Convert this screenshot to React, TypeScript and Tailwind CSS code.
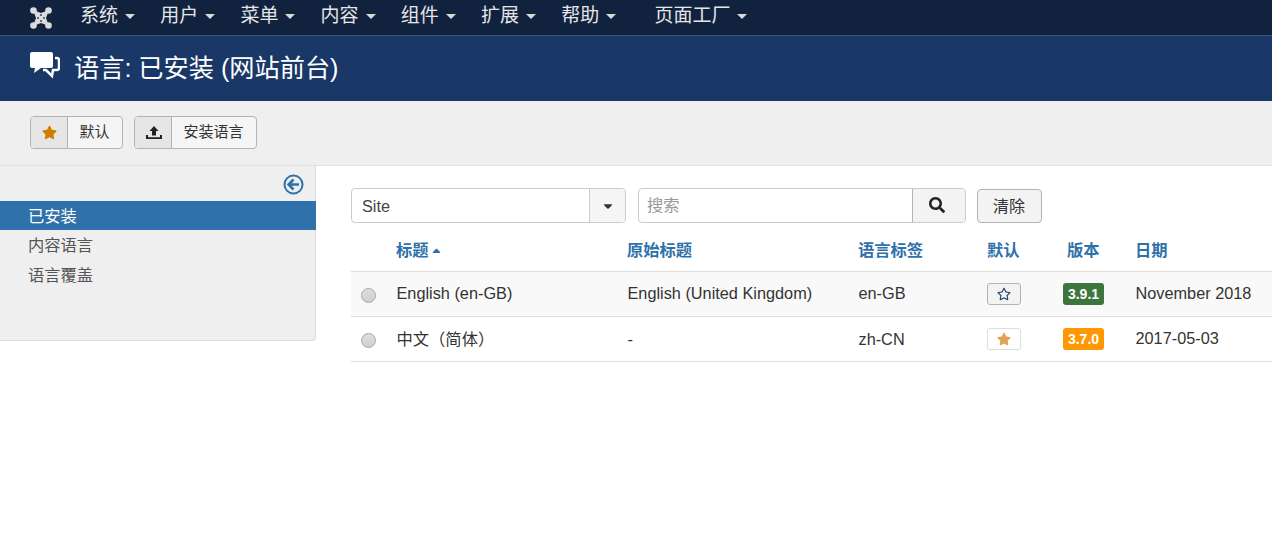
import { FaStar, FaRegStar, FaSearch, FaCaretDown, FaCaretUp } from "react-icons/fa";

const FONT = "font-['Liberation_Sans','Noto_Sans_CJK_SC',sans-serif]";

const menus = ["系统", "用户", "菜单", "内容", "组件", "扩展", "帮助"];

const Caret = () => <span className="ml-[7px] inline-block border-x-[5px] border-t-[5px] border-x-transparent border-t-[#d9d9d9]" />;

const JoomlaLogo = () => (
  <svg width="22" height="22" viewBox="0 0 22 22">
    <path d="M3 3L11 6L19 3L16 11L19 19L11 16L3 19L6 11z" fill="#dcdcdc" />
    <g fill="#dcdcdc">
      <circle cx="3.500" cy="3.500" r="3.300" />
      <circle cx="18.500" cy="3.500" r="3.300" />
      <circle cx="3.500" cy="18.500" r="3.300" />
      <circle cx="18.500" cy="18.500" r="3.300" />
    </g>
    <g fill="#3c4a63">
      <circle cx="11" cy="8" r="1" />
      <circle cx="14" cy="11" r="1" />
      <circle cx="11" cy="14" r="1" />
      <circle cx="8" cy="11" r="1" />
    </g>
  </svg>
);

const ChatIcon = () => (
  <svg width="30" height="27" viewBox="0 0 30 27" fill="none">
    <path d="M2 0h19a2 2 0 0 1 2 2v12a2 2 0 0 1-2 2H11l-7 5 1-5H2a2 2 0 0 1-2-2V2a2 2 0 0 1 2-2z" fill="#fff" />
    <path d="M25 6h2a2 2 0 0 1 2 2v8a2 2 0 0 1-2 2h-4l-1 6-6-6h-3" stroke="#fff" strokeWidth="2.500" />
  </svg>
);

const UploadIcon = () => (
  <svg width="16" height="13" viewBox="0 0 16 13" fill="#222" className="ml-[1px]">
    <path d="M8 0l4.500 5H10v4.500H6V5H3.500z" />
    <path d="M0 9h2v2.200h12V9h2v4H0z" />
  </svg>
);

const BackIcon = () => (
  <svg width="21" height="21" viewBox="0 0 21 21" fill="none" stroke="#2f71aa">
    <circle cx="10.500" cy="10.500" r="9" strokeWidth="2" />
    <path d="M16 10.500H6M10.500 5.500l-5 5 5 5" strokeWidth="2.500" />
  </svg>
);

const Radio = () => <span className="block h-[15px] w-[15px] rounded-full border border-[#a8a8a8] bg-gradient-to-b from-[#dedede] to-[#cfcfcf]" />;

const ToolButton = ({ icon, label, labelWidth }: { icon: React.ReactNode; label: string; labelWidth: string }) => (
  <div className="flex h-[33px] overflow-hidden rounded-[4px] border border-[#b3b3b3] bg-[#f5f5f5]">
    <span className="flex w-[37px] items-center justify-center border-r border-[#b3b3b3] bg-[#e6e6e6]">{icon}</span>
    <span className={`flex items-center justify-center pr-[1px] text-[15px] text-[#333] ${labelWidth}`}>{label}</span>
  </div>
);

const rows = [
  { title: "English (en-GB)", orig: "English (United Kingdom)", tag: "en-GB", on: false, ver: "3.9.1", color: "bg-[#3c763d]", date: "November 2018" },
  { title: "中文（简体）", orig: "-", tag: "zh-CN", on: true, ver: "3.7.0", color: "bg-[#ff9800]", date: "2017-05-03" },
];

export default function App() {
  return (
    <div className={`${FONT} h-[540px] w-[1272px] overflow-hidden bg-white text-[16.3px] text-[#333]`}>
      <nav className="flex h-[36px] items-center border-b border-[#3a5578] bg-[#11223f] pl-[30px] text-[#e6e6e6]">
        <span className="mr-[28px]"><JoomlaLogo /></span>
        <div className="flex items-center gap-[25.200px] pb-[3px] text-[19px]">
          {menus.map((m) => (
            <span key={m} className="flex items-center">{m}<Caret /></span>
          ))}
          <span className="ml-[13px] flex items-center">页面工厂<Caret /></span>
        </div>
      </nav>

      <header className="flex h-[65px] items-center gap-[14px] bg-[#1a3867] pl-[30px] text-white">
        <span className="mb-[7px]"><ChatIcon /></span>
        <h1 className="text-[25.200px]">语言: 已安装 (网站前台)</h1>
      </header>

      <div className="flex h-[65px] items-center gap-[11px] border-b border-[#e1e1e1] bg-[#efefef] pb-[2px] pl-[30px]">
        <ToolButton icon={<FaStar className="h-[15px] w-[15px] text-[#d17d00]" />} label="默认" labelWidth="w-[54px]" />
        <ToolButton icon={<UploadIcon />} label="安装语言" labelWidth="w-[84px]" />
      </div>

      <div className="flex">
        <aside className="h-[175px] w-[316px] shrink-0 rounded-br-[4px] border-b border-[#dcdcdc] bg-[#efefef] shadow-[inset_-1px_0_0_#dcdcdc]">
          <div className="flex h-[35px] items-center justify-end pr-[12px] pt-[1px]"><BackIcon /></div>
          <div className="flex h-[29px] items-center bg-[#2f71aa] pl-[28px] pt-[1px] text-white">已安装</div>
          <div className="flex h-[30px] items-center pl-[28px] pt-[1px] text-[#555]">内容语言</div>
          <div className="flex h-[29px] items-center pl-[28px] pt-[1px] text-[#555]">语言覆盖</div>
        </aside>

        <main className="ml-[35px] min-w-0 flex-1 pt-[22px]">
          <div className="flex h-[35px] items-start">
            <div className="flex h-[35px] w-[275px] overflow-hidden rounded-[4px] border border-[#ccc]">
              <span className="flex flex-1 items-center pl-[10px] pt-[1px] text-[#444]">Site</span>
              <span className="flex w-[36px] items-center justify-center border-l border-[#ccc] bg-[#f5f5f5]">
                <FaCaretDown className="h-[14px] w-[14px] text-[#333]" />
              </span>
            </div>
            <div className="ml-[12px] flex h-[35px] w-[328px] overflow-hidden rounded-[4px] border border-[#ccc]">
              <span className="flex flex-1 items-center pl-[8px] text-[#999]">搜索</span>
              <span className="flex w-[53px] items-center justify-center border-l border-[#b3b3b3] bg-[#f3f3f3] pb-[2px] pr-[4px]">
                <FaSearch className="h-[16px] w-[16px] text-[#222]" />
              </span>
            </div>
            <div className="ml-[11px] mt-[1px] flex h-[34px] w-[65px] items-center justify-center rounded-[4px] border border-[#b3b3b3] bg-[#f3f3f3] pr-[1px] pt-[1px] text-[16px] text-[#333]">清除</div>
          </div>

          <div className="flex h-[49px] items-center border-b border-[#ddd] pt-[7px] font-bold text-[#2f71aa]">
            <span className="flex w-[276px] items-center pl-[45px]">标题<FaCaretUp className="ml-[1px] h-[13px] w-[13px]" /></span>
            <span className="w-[231px]">原始标题</span>
            <span className="w-[129px]">语言标签</span>
            <span className="w-[76px]">默认</span>
            <span className="w-[72px] pl-[4px]">版本</span>
            <span>日期</span>
          </div>

          {rows.map((r, i) => (
            <div key={r.tag} className={`flex h-[45px] items-center border-b border-[#ddd] ${i === 0 ? "bg-[#f9f9f9]" : "bg-white"}`}>
              <span className="w-[45.500px] pl-[10px] pt-[3px]"><Radio /></span>
              <span className={`w-[231px] ${i === 0 ? "pb-[2px]" : ""}`}>{r.title}</span>
              <span className={`w-[231px] ${i === 0 ? "pb-[2px]" : ""}`}>{r.orig}</span>
              <span className={`w-[128.500px] ${i === 0 ? "pb-[2px]" : ""}`}>{r.tag}</span>
              <span className="w-[76px]">
                <span className={`flex h-[22px] w-[34px] items-center justify-center rounded-[3px] border ${r.on ? "border-[#ddd] bg-white" : "border-[#b3b3b3] bg-[#f3f3f3]"}`}>
                  {r.on ? <FaStar className="h-[14px] w-[14px] text-[#e0a458]" /> : <FaRegStar className="h-[14px] w-[14px] text-[#24476f]" />}
                </span>
              </span>
              <span className="w-[72.500px]">
                <span className={`flex h-[22px] w-[41px] items-center justify-center rounded-[3px] text-[14px] font-bold text-white ${r.color}`}>{r.ver}</span>
              </span>
              <span className="pb-[2px]">{r.date}</span>
            </div>
          ))}
        </main>
      </div>
    </div>
  );
}
